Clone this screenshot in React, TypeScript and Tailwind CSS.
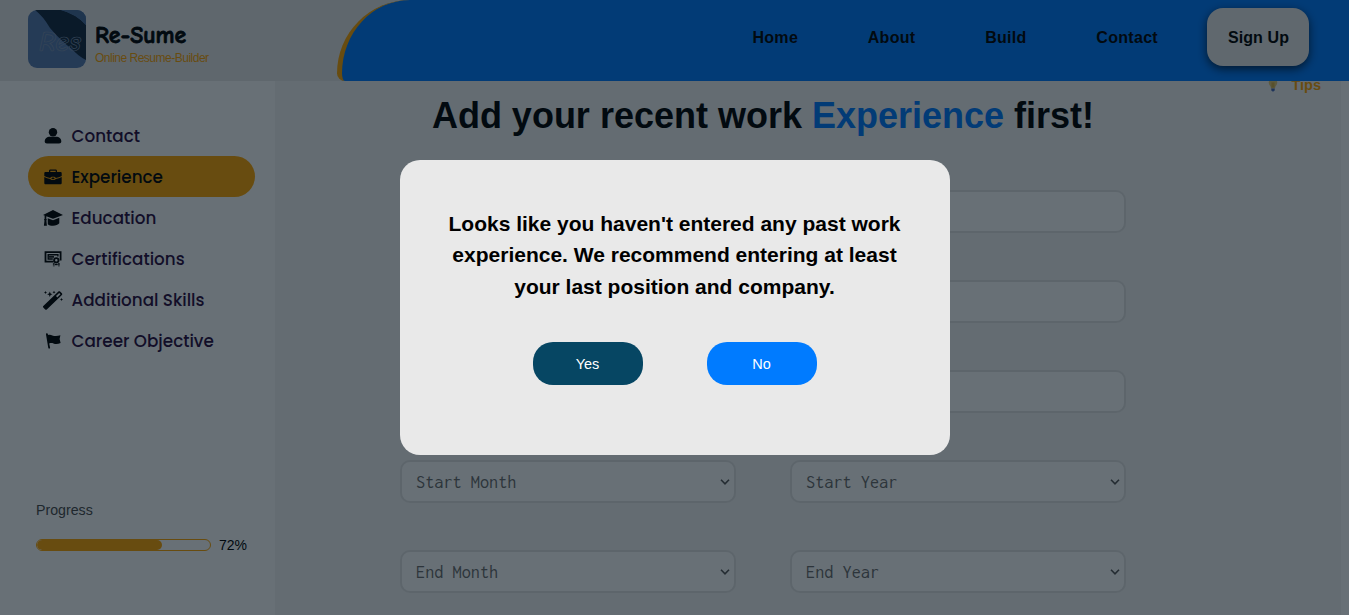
import type { ReactNode } from "react";

const PersonIcon = () => (
  <svg viewBox="0 0 20 20" className="h-5 w-5" fill="currentColor">
    <circle cx="10" cy="6.2" r="4.2" />
    <path d="M1.7 15.6c0-3 2.2-4.9 5.2-4.9h6.2c3 0 5.2 1.9 5.2 4.9 0 1.3-.9 2-2.2 2H3.9c-1.3 0-2.2-.7-2.2-2z" />
  </svg>
);

const BriefcaseIcon = () => (
  <svg viewBox="0 0 20 20" className="h-5 w-5" fill="currentColor">
    <path
      fillRule="evenodd"
      d="M6 5V3.900c0-.8.6-1.400 1.400-1.400h5.200c.8 0 1.400.6 1.400 1.400V5h3.400c.8 0 1.300.5 1.300 1.300v2.800c-1.700 1-3.700 1.700-5.900 2-.3-.8-1.200-1.300-2.800-1.300s-2.500.5-2.800 1.300c-2.200-.3-4.200-1-5.900-2V6.300C1.300 5.500 1.800 5 2.600 5zM7.300 5h5.400V3.800H7.300z"
    />
    <path d="M1.300 10c1.800 1 3.800 1.600 6 1.900.4.700 1.300 1.200 2.700 1.200s2.300-.5 2.700-1.200c2.200-.3 4.200-.9 6-1.900v6c0 .8-.5 1.300-1.300 1.300H2.600c-.8 0-1.300-.5-1.300-1.300z" />
    <ellipse cx="10" cy="11.400" rx="1.600" ry=".8" />
  </svg>
);

const CapIcon = () => (
  <svg viewBox="0 0 20 20" className="h-5 w-5" fill="currentColor">
    <path d="M10 2 20 6.900 10 10.800 3.300 8.300v2.500c.7.400.7 1.300.1 1.700l.5 5.200H.9l.6-5.200c-.6-.4-.6-1.300.1-1.700V7.600L0 6.900z" />
    <path d="m4.700 10.200 5.300 2 6.300-2.400v5.500c-1.300 1.600-3.500 2.500-6.300 2.500-2.200 0-4-.6-5.200-1.600z" />
  </svg>
);

const CertificateIcon = () => (
  <svg viewBox="0 0 20 20" className="h-5 w-5" fill="none" stroke="currentColor">
    <path d="M10.600 12.700H2.500V3.200h15.100v8.300" strokeWidth="1.800" />
    <path d="M9.800 10H5.200V5.800h9.700v1.600" strokeWidth="1.400" />
    <path d="M6 7.900h5" strokeWidth="1.600" />
    <circle cx="13.300" cy="11.300" r="2.200" strokeWidth="1.900" />
    <path d="M10.800 14.300v2.900M15.900 14.300v2.900" strokeWidth="1.800" strokeDasharray="1.500 .600" />
    <path d="M12 15.600h2.700" strokeWidth="1.200" />
  </svg>
);

const WandIcon = () => (
  <svg viewBox="0 0 20 20" className="h-5 w-5" fill="currentColor">
    <path
      fillRule="evenodd"
      d="m.3 15.900 15.100-14.400c.5-.5 1.200-.5 1.700 0l1.800 1.700c.5.5.5 1.200 0 1.700L3.800 19.400c-.5.500-1.100.5-1.600 0L.3 17.500c-.5-.5-.5-1.100 0-1.600zM13 6.100l1.300 1.300 3.200-3.200-1.300-1.300z"
    />
    <path d="m6.800 1.600.8 1.900 1.900.8-1.900.8-.8 1.900-.8-1.900-1.900-.8 1.900-.8zM2.500 1l.5 1 1 .5-1 .5-.5 1-.5-1-1-.5 1-.5zM11 .700l.5 1 1 .5-1 .5-.5 1-.5-1-1-.5 1-.5zM18.500 8.100l.5 1 1 .5-1 .5-.5 1-.5-1-1-.5 1-.5z" />
  </svg>
);

const FlagIcon = () => (
  <svg viewBox="0 0 20 20" className="h-5 w-5" fill="currentColor">
    <path d="M3 3.400c-.2-1.200 1.600-1.500 1.900-.4l.1 1.100c1.500-.4 2.900-.3 4.300.3 2.300.9 4.700 1 8.100-.1l-.8 3.800 1 3.900c-2.700 1.200-5 1.300-7.100.5-1.500-.5-2.800-.5-4.300-.1l.9 4.300c.1 1-1.600 1.300-1.800.3z" />
  </svg>
);

const steps: { label: string; icon: ReactNode; active?: boolean }[] = [
  { label: "Contact", icon: <PersonIcon /> },
  { label: "Experience", icon: <BriefcaseIcon />, active: true },
  { label: "Education", icon: <CapIcon /> },
  { label: "Certifications", icon: <CertificateIcon /> },
  { label: "Additional Skills", icon: <WandIcon /> },
  { label: "Career Objective", icon: <FlagIcon /> },
];

function Logo() {
  return (
    <div className="flex">
      <div className="relative h-[58px] w-[58px] overflow-hidden rounded-[9px] bg-[#587bb0]">
        <svg viewBox="0 0 58 58" className="h-full w-full">
          <path d="M7 0h26q15 4 25 15v35Q50 46 44 39 33 31 22 18 15 6 7 0z" fill="#14283f" />
          <path d="M33 0h25v15Q48 4 33 0z" fill="#4a6c9c" />
        </svg>
        <span className="absolute top-[14px] left-[11px] font-['Comic_Neue','Liberation_Sans',sans-serif] text-[28px] leading-9 font-bold text-transparent italic [-webkit-text-stroke:0.7px_#8093b0]">
          Res
        </span>
      </div>
      <div className="ml-[9px] pt-3">
        <div className="font-['Comic_Neue','Liberation_Sans',sans-serif] text-[23.800px] leading-7 font-bold whitespace-nowrap text-black [-webkit-text-stroke:0.8px_#000]">
          Re-Sume
        </div>
        <div className="text-xs leading-4 tracking-[-0.5px] whitespace-nowrap text-[#ffa500]">
          Online Resume-Builder
        </div>
      </div>
    </div>
  );
}

function Header() {
  return (
    <header className="relative z-10 flex h-[81px] shrink-0 justify-between bg-[#e9e9e9]">
      <div className="pt-[10px] pl-7">
        <Logo />
      </div>
      <nav className="flex w-[1012px] rounded-tl-[75px] rounded-bl-[8px] border-l-[5px] border-[#ffa500] bg-[#007bff] pr-10 text-base font-bold text-black">
        <div className="flex flex-1 justify-end gap-[69.700px] pt-[26px] pr-[49px] leading-6 tracking-[0.3px]">
          <a>Home</a>
          <a>About</a>
          <a>Build</a>
          <a>Contact</a>
        </div>
        <button className="mt-2 h-[58px] w-[102px] rounded-2xl bg-[#eaeaea] pt-0.5 pl-px font-bold tracking-[0.1px] shadow-[0_3px_10px_rgba(0,0,0,0.7)]">
          Sign Up
        </button>
      </nav>
    </header>
  );
}

function Sidebar() {
  return (
    <aside className="flex w-[275px] shrink-0 flex-col bg-white pt-[34px] pl-7">
      {steps.map((s) => (
        <div
          key={s.label}
          className={
            "flex h-[41.100px] w-[227px] items-center gap-[8.500px] rounded-full pt-[1.800px] pl-[15px] font-['Poppins','Inter',sans-serif] text-[16.800px] font-medium " +
            (s.active ? "bg-[#ffa500] text-black" : "text-[#2b0a3d]")
          }
        >
          <span className="-mt-px text-black">{s.icon}</span>
          {s.label}
        </div>
      ))}
      <div className="mt-[138.600px] pl-2">
        <div className="text-[14.200px] leading-5 text-[#4a4a4a]">Progress</div>
        <div className="mt-[15px] flex items-center gap-2">
          <div className="h-3 w-[175px] overflow-hidden rounded-full border border-[#ffa500]">
            <div className="h-full w-[72%] rounded-full bg-[#ffa500]" />
          </div>
          <span className="text-sm leading-5 text-black">72%</span>
        </div>
      </div>
    </aside>
  );
}

function SelectBox({ label }: { label: string }) {
  return (
    <div className="flex h-[43px] w-[336px] items-center justify-between rounded-[10px] border-2 border-[#e4e4e4] bg-white pr-[4px] pl-[14px] font-['Inconsolata','DejaVu_Sans_Mono',monospace] text-[18.250px] text-[#6b6b6b]">
      <span>{label}</span>
      <svg viewBox="0 0 10 6" className="h-[6px] w-[10px]" fill="none" stroke="#555" strokeWidth="1.600">
        <path d="M1 .800 5 4.800 9 .800" />
      </svg>
    </div>
  );
}

function Tips() {
  return (
    <div className="absolute top-[-6px] right-[20px] flex items-center gap-3 text-[14.500px] leading-5 font-bold text-[#ffa500]">
      <svg viewBox="0 0 14 18" className="h-[16px] w-[12px]">
        <path d="M7 1a5 5 0 0 1 5 5c0 3-2.700 4-2.700 7H4.700C4.700 10 2 9 2 6a5 5 0 0 1 5-5z" fill="#e3c878" />
        <path d="M6 6v6M8 6v6" stroke="#c89b20" />
        <path d="M5 13h4v2.500L7 17l-2-1.500z" fill="#4a6ab8" />
      </svg>
      Tips
    </div>
  );
}

function Modal() {
  return (
    <div className="fixed inset-0 z-20 flex justify-center bg-[rgba(4,17,27,0.6)] pt-[160px]">
      <div className="flex h-[295px] w-[550px] flex-col items-center rounded-[20px] bg-[#e9e9e9] pt-[47.800px]">
        <p className="w-[470px] text-center text-[21px] leading-[31.500px] font-bold text-black">
          Looks like you haven't entered any past work experience. We recommend entering at least your last position
          and company.
        </p>
        <div className="mt-[39.700px] flex gap-16 text-[14.500px] text-white">
          <button className="h-[43px] w-[110px] rounded-[20px] bg-[#064663] pt-0.5">Yes</button>
          <button className="h-[43px] w-[110px] rounded-[20px] bg-[#007bff] pt-0.5">No</button>
        </div>
      </div>
    </div>
  );
}

export default function App() {
  return (
    <div className="flex h-[615px] flex-col overflow-hidden bg-white font-['Liberation_Sans',Arial,sans-serif]">
      <Header />
      <div className="flex min-h-0 flex-1">
        <Sidebar />
        <main className="relative w-[1066px] bg-[#f4f4f4]">
          <Tips />
          <h1 className="pt-[13px] pr-[90px] text-center text-4xl leading-[44px] font-bold whitespace-nowrap text-black">
            Add your recent work <span className="text-[#007bff]">Experience</span> first!
          </h1>
          <div className="mt-[52px] ml-[125px] flex w-[726px] flex-col gap-[47px]">
            <div className="h-[43px] rounded-[10px] border-2 border-[#e4e4e4] bg-white" />
            <div className="h-[43px] rounded-[10px] border-2 border-[#e4e4e4] bg-white" />
            <div className="h-[43px] rounded-[10px] border-2 border-[#e4e4e4] bg-white" />
            <div className="flex justify-between">
              <SelectBox label="Start Month" />
              <SelectBox label="Start Year" />
            </div>
            <div className="flex justify-between">
              <SelectBox label="End Month" />
              <SelectBox label="End Year" />
            </div>
          </div>
        </main>
      </div>
      <Modal />
    </div>
  );
}
